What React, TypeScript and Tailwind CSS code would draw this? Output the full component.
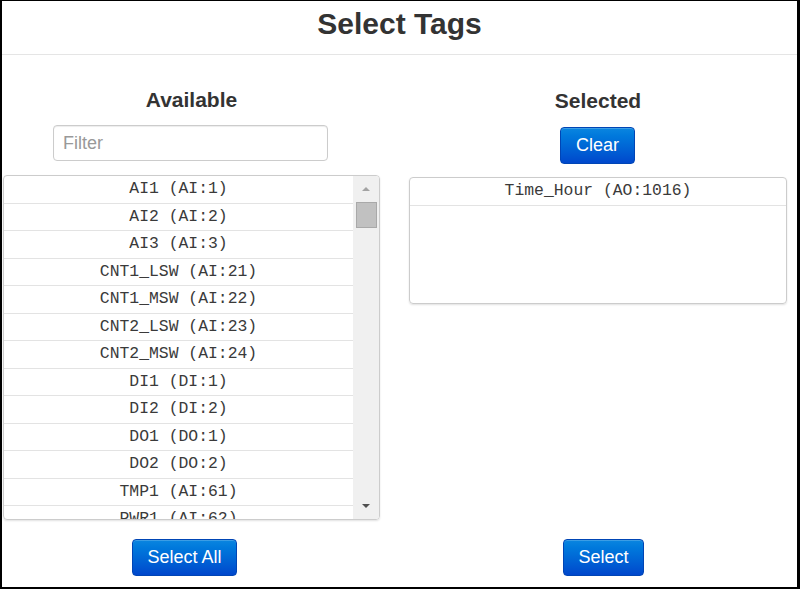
import React from "react";

const available = [
  "AI1 (AI:1)",
  "AI2 (AI:2)",
  "AI3 (AI:3)",
  "CNT1_LSW (AI:21)",
  "CNT1_MSW (AI:22)",
  "CNT2_LSW (AI:23)",
  "CNT2_MSW (AI:24)",
  "DI1 (DI:1)",
  "DI2 (DI:2)",
  "DO1 (DO:1)",
  "DO2 (DO:2)",
  "TMP1 (AI:61)",
  "PWR1 (AI:62)",
];

const selected = ["Time_Hour (AO:1016)"];

function BlueButton({ label, className }: { label: string; className: string }) {
  return (
    <button
      type="button"
      className={
        "h-[37px] rounded-[4px] border border-[#0045b5] bg-gradient-to-b from-[#0b86e0] to-[#0047cc] text-[18px] text-white shadow-[inset_0_1px_0_rgba(255,255,255,0.2)] " +
        className
      }
    >
      {label}
    </button>
  );
}

function TagRow({ label }: { label: string }) {
  return (
    <div className="flex h-[27.5px] shrink-0 items-center justify-center border-b border-[#e3e3e3] pt-[1px] font-['Liberation_Mono','Courier_New',monospace] text-[16.4px] text-[#3a3a3a]">
      {label}
    </div>
  );
}

function FakeScrollbar() {
  return (
    <div className="flex w-[26px] flex-col items-center bg-[#f0f0f0]">
      <div className="flex h-[26px] items-center justify-center">
        <div className="h-0 w-0 border-x-[4px] border-b-[4px] border-x-transparent border-b-[#a3a3a3]" />
      </div>
      <div className="h-[26px] w-[21px] border border-[#a9a9a9] bg-[#c1c1c1]" />
      <div className="flex-1" />
      <div className="flex h-[26px] items-center justify-center">
        <div className="h-0 w-0 border-x-[4px] border-t-[4px] border-x-transparent border-t-[#505050]" />
      </div>
    </div>
  );
}

export default function App() {
  return (
    <div className="h-[589px] w-[800px] overflow-hidden border-b-2 border-l-2 border-r-3 border-t-1 border-black bg-white font-['Liberation_Sans',Arial,sans-serif] text-[#333]">
      <div className="h-[54px] border-b border-[#e5e5e5] pt-[5px] text-center">
        <h1 className="text-[30px] font-bold leading-[36px]">Select Tags</h1>
      </div>

      <div className="flex gap-[29px] pl-[1px] pt-[33px]">
        {/* available column */}
        <div className="flex w-[377px] flex-col">
          <h2 className="text-center text-[21px] font-bold leading-[24px]">Available</h2>
          <input
            placeholder="Filter"
            className="ml-[50px] mt-[13px] h-[36px] w-[275px] rounded-[4px] border border-[#ccc] px-[9px] text-[18px] shadow-[inset_0_1px_1px_rgba(0,0,0,0.075)] outline-none placeholder:text-[#999]"
          />
          <div className="mt-[14px] flex h-[345px] overflow-hidden rounded-[4px] border border-[#ccc] shadow-[0_1px_2px_rgba(0,0,0,0.12)]">
            <div className="flex flex-1 flex-col overflow-hidden">
              {available.map((t) => (
                <TagRow key={t} label={t} />
              ))}
            </div>
            <FakeScrollbar />
          </div>
          <BlueButton label="Select All" className="ml-[129px] mt-[19px] w-[105px] self-start" />
        </div>

        {/* selected column */}
        <div className="flex w-[378px] flex-col">
          <h2 className="pt-[1px] text-center text-[21px] font-bold leading-[24px]">Selected</h2>
          <BlueButton label="Clear" className="ml-[151px] mt-[14px] w-[75px] self-start" />
          <div className="mt-[13px] flex h-[127px] flex-col overflow-hidden rounded-[4px] border border-[#ccc] shadow-[0_1px_2px_rgba(0,0,0,0.12)]">
            {selected.map((t) => (
              <TagRow key={t} label={t} />
            ))}
          </div>
          <BlueButton label="Select" className="ml-[154px] mt-auto w-[81px] self-start" />
        </div>
      </div>
    </div>
  );
}
